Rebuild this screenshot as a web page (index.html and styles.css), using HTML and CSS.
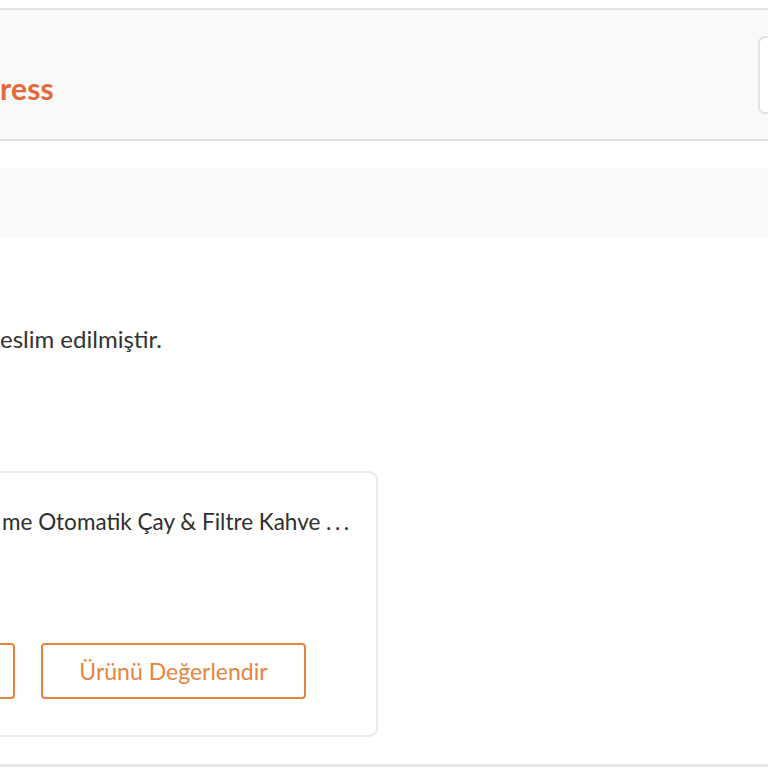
FILE: index.html
```html
<!DOCTYPE html>
<html lang="tr">
<head>
<meta charset="utf-8">
<title>Sipariş</title>
<link rel="stylesheet" href="styles.css">
</head>
<body>
<div class="page">
  <header class="header">
    <div class="brand">ress</div>
    <div class="search"></div>
  </header>
  <div class="band"></div>
  <p class="status">eslim edilmiştir.</p>
  <div class="card">
    <div class="product-name">me Otomatik Çay &amp; Filtre Kahve <span class="dots">...</span></div>
    <div class="actions">
      <button class="btn btn-cut"></button>
      <button class="btn btn-rate">Ürünü Değerlendir</button>
    </div>
  </div>
  <div class="footer-line"></div>
</div>
</body>
</html>
```
FILE: styles.css
```css
html, body {
  margin: 0;
  padding: 0;
  background: #ffffff;
  overflow: hidden;
}
body {
  width: 768px;
  height: 768px;
  font-family: "Lato", "Open Sans", sans-serif;
  color: #333333;
}
.page {
  padding-top: 8px;
  display: flex;
  flex-direction: column;
}
.header {
  box-sizing: border-box;
  height: 133px;
  background: #f9f9f9;
  border-top: 2px solid #e3e3e3;
  border-bottom: 2px solid #e3e3e3;
  display: flex;
  justify-content: space-between;
  align-items: flex-start;
}
.brand {
  margin-top: 58px;
  font-size: 30px;
  font-weight: 700;
  color: #e4693a;
  line-height: 40px;
  letter-spacing: 0.2px;
}
.search {
  margin-top: 26px;
  width: 80px;
  height: 78px;
  box-sizing: border-box;
  margin-right: -70px;
  background: #ffffff;
  border: 2px solid #e2e2e2;
  border-radius: 7px;
}
.band {
  margin-top: 27px;
  height: 70px;
  background: #fafafa;
}
.status {
  margin: 86px 0 0 0;
  font-size: 24px;
  line-height: 30px;
  color: #333333;
}
.card {
  margin-top: 117px;
  margin-left: -20px;
  width: 398px;
  height: 266px;
  box-sizing: border-box;
  border: 2px solid #ececec;
  border-radius: 9px;
  display: flex;
  flex-direction: column;
}
.product-name {
  margin-top: 34px;
  padding-left: 20px;
  font-size: 22.5px;
  line-height: 30px;
  color: #2e2e2e;
}
.dots {
  letter-spacing: 3.5px;
}
.actions {
  margin-top: 106px;
  display: flex;
  gap: 26px;
}
.btn {
  box-sizing: border-box;
  height: 56px;
  background: #ffffff;
  border: 2px solid #e5843f;
  border-radius: 4px;
  color: #e5843f;
  font-family: "Lato", "Open Sans", sans-serif;
  font-size: 23px;
  padding: 0;
}
.btn-cut {
  width: 35px;
  margin-left: -2px;
}
.btn-rate {
  width: 265px;
}
.footer-line {
  margin-top: 27px;
  height: 3px;
  background: #e6e6e6;
}
```
